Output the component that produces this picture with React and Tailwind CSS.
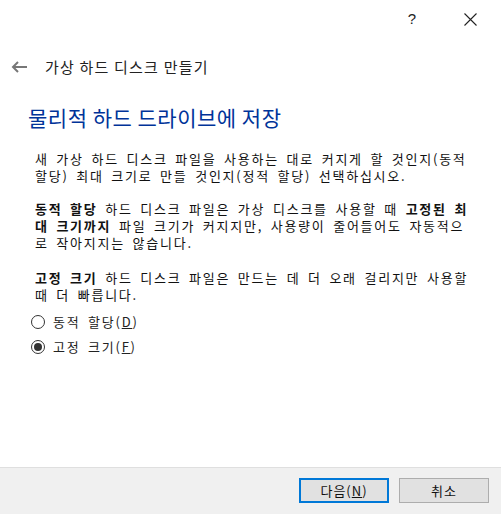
import React, { useState } from 'react';

const font = { fontFamily: '"Noto Sans CJK KR", "Noto Sans", sans-serif' };

const Radio = ({ checked, label, hotkey, onSelect }) => (
  <label onClick={onSelect} className="flex items-center h-[25px] cursor-default">
    <span className="w-[14px] h-[14px] rounded-full border border-[#333333] bg-white flex items-center justify-center">
      {checked && <span className="w-[8px] h-[8px] rounded-full bg-[#333333]" />}
    </span>
    <span className="ml-[8px] text-[13px] tracking-[1.75px] [word-spacing:3px] text-[#222222]">
      {label}(<span className="underline">{hotkey}</span>)
    </span>
  </label>
);

const App = () => {
  const [mode, setMode] = useState('fixed');

  return (
    <div style={font} className="w-[501px] h-[515px] bg-white flex flex-col text-black select-none">
      {/* title bar */}
      <div className="h-[38px] flex justify-end items-center pr-[8px]">
        <span className="w-[46px] text-center text-[15px] text-[#222]" style={{ fontFamily: '"Liberation Sans", sans-serif' }}>?</span>
        <span className="w-[46px] h-[38px] ml-[12px] flex items-center justify-center">
          <svg width="13" height="13" viewBox="0 0 13 13" stroke="#222" strokeWidth="1.1">
            <path d="M0.5 0.5 L12.5 12.5 M12.5 0.5 L0.5 12.5" />
          </svg>
        </span>
      </div>

      {/* header */}
      <div className="h-[24px] mt-[17px] flex items-center">
        <svg className="ml-[11px]" width="16" height="12" viewBox="0 0 16 12" fill="none" stroke="#777" strokeWidth="2">
          <path d="M16 6 H2 M7 1 L2 6 L7 11" />
        </svg>
        <span className="ml-[18px] text-[15px] tracking-[1.2px] text-[#222]">가상 하드 디스크 만들기</span>
      </div>

      {/* page title */}
      <div className="mt-[23px] ml-[28px] text-[21px] leading-[30px] tracking-[0.5px] text-[#003399]">
        물리적 하드 드라이브에 저장
      </div>

      {/* body */}
      <div className="mt-[18px] ml-[35px] text-[13px] leading-[17px] tracking-[1.75px] [word-spacing:3px] whitespace-nowrap text-[#111]">
        <p>
          새 가상 하드 디스크 파일을 사용하는 대로 커지게 할 것인지(동적<br />
          할당) 최대 크기로 만들 것인지(정적 할당) 선택하십시오.
        </p>
        <p className="mt-[16px]">
          <b>동적 할당</b> 하드 디스크 파일은 가상 디스크를 사용할 때 <b>고정된 최</b><br />
          <b>대 크기까지</b> 파일 크기가 커지지만, 사용량이 줄어들어도 자동적으<br />
          로 작아지지는 않습니다.
        </p>
        <p className="mt-[18px]">
          <b>고정 크기</b> 하드 디스크 파일은 만드는 데 더 오래 걸리지만 사용할<br />
          때 더 빠릅니다.
        </p>
      </div>

      {/* options */}
      <div className="mt-[6px] ml-[31px] flex flex-col">
        <Radio checked={mode === 'dynamic'} label="동적 할당" hotkey="D" onSelect={() => setMode('dynamic')} />
        <Radio checked={mode === 'fixed'} label="고정 크기" hotkey="F" onSelect={() => setMode('fixed')} />
      </div>

      <div className="flex-1" />

      {/* footer */}
      <div className="h-[47px] mb-[1px] bg-[#f0f0f0] border-t border-[#dfdfdf] flex items-start justify-end pt-[10px] pr-[12px] gap-[10px]">
        <button className="w-[90px] h-[25px] bg-[#e1e1e1] border-2 border-[#0078d7] text-[13px] tracking-[1px] text-[#111]">
          다음(<span className="underline">N</span>)
        </button>
        <button className="w-[90px] h-[25px] bg-[#e1e1e1] border border-[#adadad] text-[13px] tracking-[1px] text-[#111]">
          취소
        </button>
      </div>
    </div>
  );
};

export default App;
